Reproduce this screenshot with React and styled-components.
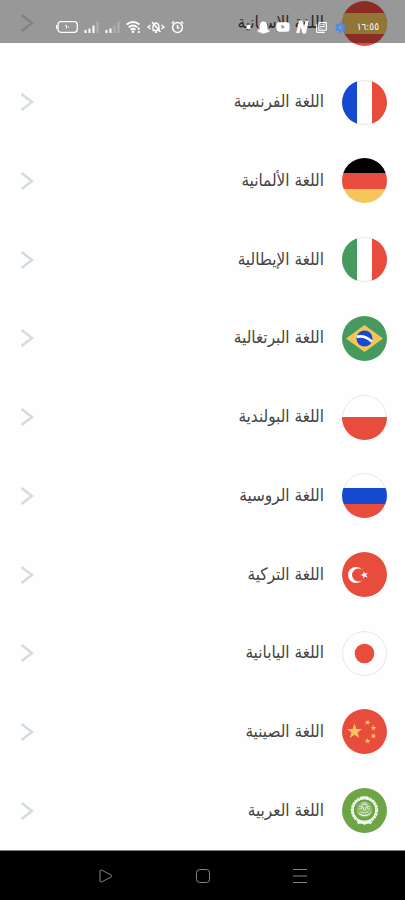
import React from 'react';
import styled, { createGlobalStyle } from 'styled-components';
import { FaSnapchatGhost, FaYoutube } from 'react-icons/fa';
import { MdOutlineLibraryBooks, MdSettings } from 'react-icons/md';

const GlobalStyle = createGlobalStyle`
  * {
    box-sizing: border-box;
  }

  body {
    margin: 0;
    background: #fefefe;
    font-family: 'DejaVu Sans Condensed', 'DejaVu Sans', sans-serif;
  }
`;

const Screen = styled.div`
  position: relative;
  display: flex;
  flex-direction: column;
  height: 100vh;
  overflow: hidden;
`;

/* the list is scrolled a little under the status bar */
const LanguageList = styled.ul`
  flex: 1;
  display: flex;
  flex-direction: column;
  margin: -16px 0 0;
  padding: 0;
  list-style: none;
`;

const LanguageItem = styled.li`
  flex: 1;
  display: flex;
`;

const LanguageButton = styled.button`
  flex: 1;
  display: flex;
  align-items: center;
  gap: 18px;
  padding: 0 18px 0 20px;
  border: none;
  background: transparent;
  color: #444;
  font-family: inherit;
  font-size: 17px;
  line-height: 24px;
  cursor: pointer;
`;

const LanguageName = styled.span`
  flex: 1;
  padding-bottom: 2px;
  text-align: start;
`;

const FlagIcon = styled.svg`
  flex: none;
  width: 45px;
  height: 45px;
  border-radius: 50%;
`;

const Chevron = styled.svg`
  flex: none;
  width: 14px;
  height: 18px;
  fill: none;
  stroke: #d3dde0;
  stroke-width: 2.6;
`;

const StatusBar = styled.header`
  position: absolute;
  top: 0;
  left: 0;
  right: 0;
  display: flex;
  justify-content: space-between;
  align-items: center;
  height: 43px;
  padding: 11px 26px 0 56px;
  background: rgba(0, 0, 0, 0.4);
  color: #fff;
`;

const StatusGroup = styled.div`
  display: flex;
  align-items: center;
  gap: 6px;
`;

const StatusIcon = styled.svg`
  display: block;
  height: 14px;
  fill: none;
  stroke: #fff;
`;

const Clock = styled.time`
  margin-left: 4px;
  font-size: 10px;
  line-height: 14px;
`;

const NavBar = styled.nav`
  display: flex;
  justify-content: center;
  align-items: center;
  gap: 83px;
  height: 50px;
  border-top: 1px solid #7d7d7d;
  background: #000;
`;

const NavButton = styled.button`
  display: block;
  padding: 0;
  border: none;
  background: none;
  cursor: pointer;

  svg {
    display: block;
    width: 14px;
    height: 14px;
    fill: none;
    stroke: #858585;
  }
`;

const RED = '#e84c3d';
const BLUE = '#1549cf';
const GREEN = '#479a5e';
const YELLOW = '#f3c55b';

function starPoints(cx, cy, r, turn = 0) {
  return Array.from({ length: 10 }, (_, i) => {
    const radius = i % 2 ? r * 0.4 : r;
    const angle = (Math.PI / 5) * i - Math.PI / 2 + turn;
    return `${cx + radius * Math.cos(angle)},${cy + radius * Math.sin(angle)}`;
  }).join(' ');
}

const Star = ({ cx, cy, r, turn, fill }) => <polygon points={starPoints(cx, cy, r, turn)} fill={fill} />;

const Columns = ({ colors }) => (
  <>
    <rect width="15" height="45" fill={colors[0]} />
    <rect x="15" width="15" height="45" fill={colors[1]} />
    <rect x="30" width="15" height="45" fill={colors[2]} />
  </>
);

const Bands = ({ colors }) => (
  <>
    <rect width="45" height="15" fill={colors[0]} />
    <rect y="15" width="45" height="16" fill={colors[1]} />
    <rect y="31" width="45" height="14" fill={colors[2]} />
  </>
);

const Outline = () => <circle cx="22.5" cy="22.5" r="22" fill="none" stroke="#dcdcdc" strokeWidth="0.8" />;

const flags = {
  es: (
    <>
      <rect width="45" height="45" fill={RED} />
      <rect y="12" width="45" height="21" fill={YELLOW} />
    </>
  ),
  fr: (
    <>
      <Outline />
      <Columns colors={[BLUE, 'none', RED]} />
    </>
  ),
  de: <Bands colors={['#000', RED, YELLOW]} />,
  it: (
    <>
      <Outline />
      <Columns colors={[GREEN, 'none', RED]} />
    </>
  ),
  br: (
    <>
      <rect width="45" height="45" fill={GREEN} />
      <path d="M4 22.5 22.5 9 41 22.5 22.5 36Z" fill={YELLOW} />
      <circle cx="22.5" cy="22.5" r="8" fill={BLUE} />
      <path d="M14.8 20.8Q23 18.8 29.8 25.6" fill="none" stroke="#fff" strokeWidth="2.6" />
    </>
  ),
  pl: (
    <>
      <Outline />
      <rect y="22" width="45" height="23" fill={RED} />
    </>
  ),
  ru: (
    <>
      <Outline />
      <Bands colors={['none', BLUE, RED]} />
    </>
  ),
  tr: (
    <>
      <rect width="45" height="45" fill={RED} />
      <circle cx="14" cy="23" r="8" fill="#fff" />
      <circle cx="16.5" cy="23" r="6.5" fill={RED} />
      <Star cx={22.5} cy={23} r={4} turn={-0.3} fill="#fff" />
    </>
  ),
  jp: (
    <>
      <Outline />
      <circle cx="22.5" cy="22.5" r="9.8" fill={RED} />
    </>
  ),
  cn: (
    <>
      <rect width="45" height="45" fill={RED} />
      <Star cx={12.5} cy={22.5} r={8} fill={YELLOW} />
      <Star cx={25.5} cy={13.5} r={3.2} turn={0.3} fill={YELLOW} />
      <Star cx={31.5} cy={19} r={3.2} turn={0.1} fill={YELLOW} />
      <Star cx={31.5} cy={27} r={3.2} turn={0.3} fill={YELLOW} />
      <Star cx={25.5} cy={32} r={3.2} fill={YELLOW} />
    </>
  ),
  ar: (
    <>
      <rect width="45" height="45" fill="#6da544" />
      <circle cx="22.5" cy="22" r="12.2" fill="none" stroke="#f2f7ee" strokeWidth="3" strokeDasharray="2.6 0.5" />
      <circle cx="22.5" cy="22" r="11.4" fill="none" stroke="#f2f7ee" strokeWidth="1.2" />
      <path
        d="M20.5 10.5V8.5M24.5 10.5V8.5M15.5 35Q19 33 22.5 35.5Q26 33 29.5 35"
        fill="none"
        stroke="#f2f7ee"
        strokeWidth="2.6"
      />
      <circle cx="22.5" cy="21.5" r="8" fill="#8fba6e" />
      <path d="M14.5 20A8 8 0 1 0 30.5 20A8 7 0 0 1 14.5 20Z" fill="#fff" />
      <path
        d="M17 18.5h3v-2h5v2h3M17 21h2.5v-1.5h2V22h2v-2.5h2V21h2.500M18.500 24q4 2 8-.5M20 15h5"
        fill="none"
        stroke="#dcebd0"
        strokeWidth="0.9"
      />
    </>
  ),
};

const languages = [
  { code: 'es', name: 'اللغة الإسبانية' },
  { code: 'fr', name: 'اللغة الفرنسية' },
  { code: 'de', name: 'اللغة الألمانية' },
  { code: 'it', name: 'اللغة الإيطالية' },
  { code: 'br', name: 'اللغة البرتغالية' },
  { code: 'pl', name: 'اللغة البولندية' },
  { code: 'ru', name: 'اللغة الروسية' },
  { code: 'tr', name: 'اللغة التركية' },
  { code: 'jp', name: 'اللغة اليابانية' },
  { code: 'cn', name: 'اللغة الصينية' },
  { code: 'ar', name: 'اللغة العربية' },
];

const Battery = () => (
  <StatusIcon width="22" viewBox="0 0 22 14">
    <rect x="2" y="1.7" width="19.3" height="10.6" rx="3" strokeWidth="1.3" />
    <path d="M.7 5v4" strokeWidth="1.3" />
    <path d="M9 5.5h1.500V8.500M12.500 6.500v1.200" strokeWidth="1" />
  </StatusIcon>
);

const Signal = ({ bars }) => (
  <StatusIcon width="15" viewBox="0 0 15 14" strokeWidth="2">
    {[10, 8.5, 5.5, 2].map((top, i) => (
      <path key={top} d={`M${1.5 + i * 4} ${top}V13`} opacity={i < bars ? 1 : 0.25} />
    ))}
  </StatusIcon>
);

const Wifi = () => (
  <StatusIcon width="15" viewBox="0 0 15 14" strokeWidth="1.8">
    <path d="M.7 4.500Q7 -.5 13.500 4.500M2.700 7.200Q7 3.700 11.500 7.200M4.600 9.700Q7 7.800 9.500 9.700" />
    <circle cx="7" cy="11.8" r="1.3" fill="#fff" stroke="none" />
    <path d="M12.800 7.500v2.200M12.800 11v2" />
  </StatusIcon>
);

const BellOff = () => (
  <StatusIcon width="18" viewBox="0 0 18 14" strokeWidth="1.4">
    <path d="M5.500 10.500h7.500M6 10V6.500Q6.500 3.500 9 3Q11.500 3.500 12 6.500V10M8 12.200h2M5 2 13.500 12M3.500 5 1 7 3.500 9M14.500 5 17 7 14.500 9" />
  </StatusIcon>
);

const Alarm = () => (
  <StatusIcon width="13" viewBox="0 0 13 14" strokeWidth="1.5">
    <circle cx="6.5" cy="7.5" r="4.9" />
    <path d="M6.500 5v3H8.500M.8 3.500 3 1.500M12.200 3.500 10 1.500" />
  </StatusIcon>
);

const NewsLogo = () => (
  <StatusIcon width="13" viewBox="0 0 13 14" strokeWidth="3.2">
    <path d="M1.800 13 4.600 1 8.200 13 11.200 1" strokeLinejoin="bevel" />
  </StatusIcon>
);

function LanguageRow({ language }) {
  return (
    <LanguageItem>
      <LanguageButton type="button">
        <FlagIcon viewBox="0 0 45 45">{flags[language.code]}</FlagIcon>
        <LanguageName>{language.name}</LanguageName>
        <Chevron viewBox="0 0 14 18">
          <path d="M1.500 1 12 9 1.500 17" />
        </Chevron>
      </LanguageButton>
    </LanguageItem>
  );
}

export default function App() {
  return (
    <>
      <GlobalStyle />
      <Screen>
        <LanguageList dir="rtl">
          {languages.map((language) => (
            <LanguageRow key={language.code} language={language} />
          ))}
        </LanguageList>

        <StatusBar>
          <StatusGroup>
            <Battery />
            <Signal bars={3} />
            <Signal bars={2} />
            <Wifi />
            <BellOff />
            <Alarm />
          </StatusGroup>
          <StatusGroup>
            <StatusIcon width="5" viewBox="0 0 5 14">
              <circle cx="2.5" cy="7" r="2.2" fill="#fff" stroke="none" />
            </StatusIcon>
            <FaSnapchatGhost size={13} />
            <FaYoutube size={14} />
            <NewsLogo />
            <MdOutlineLibraryBooks size={13} />
            <MdSettings size={13} color="#4a8bea" />
            <Clock>١٦:٥٥</Clock>
          </StatusGroup>
        </StatusBar>

        <NavBar>
          <NavButton type="button" aria-label="رجوع">
            <svg viewBox="0 0 14 14">
              <path d="M1 2Q1 .5 2.500 1L12.500 6.300Q13.500 7 12.500 7.700L2.500 13Q1 13.500 1 12Z" />
            </svg>
          </NavButton>
          <NavButton type="button" aria-label="الرئيسية">
            <svg viewBox="0 0 14 14">
              <rect x=".5" y=".5" width="13" height="13" rx="3" />
            </svg>
          </NavButton>
          <NavButton type="button" aria-label="التطبيقات">
            <svg viewBox="0 0 14 14">
              <path d="M0 .5H14M0 7H14M0 13.500H14" />
            </svg>
          </NavButton>
        </NavBar>
      </Screen>
    </>
  );
}
